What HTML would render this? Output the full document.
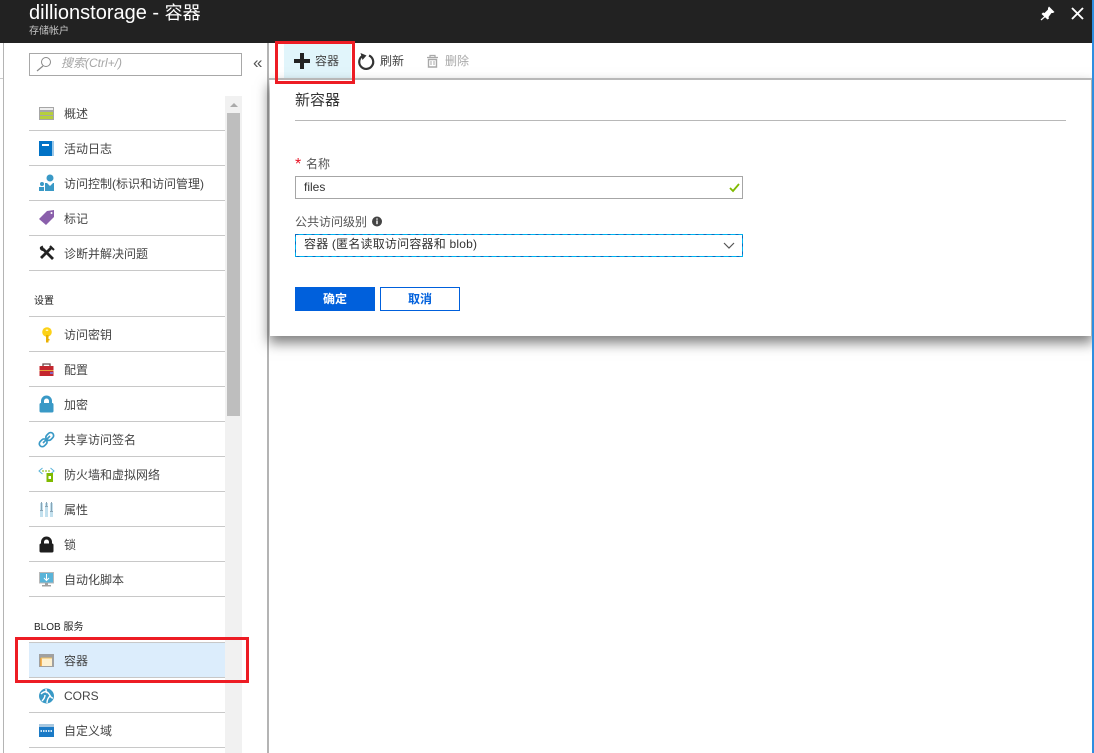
<!DOCTYPE html>
<html lang="zh-CN">
<head>
<meta charset="utf-8">
<style>
html,body{margin:0;padding:0;width:1094px;height:753px;overflow:hidden;background:#fff;}
body{position:relative;font-family:"Liberation Sans","Noto Sans CJK SC",sans-serif;font-size:12px;color:#444;}
div,span{position:absolute;white-space:nowrap;box-sizing:border-box;}
.t span{position:static;}
.t{line-height:16px;height:16px;}
.sep{left:29px;width:196px;height:1px;background:#c8c8c8;}
.h{font-size:10px;color:#222;left:34px;}
.m{left:64px;}
svg{position:absolute;left:0;top:0;}
</style>
</head>
<body>
<!-- frame -->
<div style="left:0;top:78px;width:3px;height:1px;background:#ccc"></div>
<div style="left:3px;top:43px;width:1px;height:710px;background:#b4b4b4"></div>
<div style="left:267px;top:43px;width:2px;height:710px;background:#b4b4b4"></div>

<!-- header -->
<div style="left:0;top:0;width:1092px;height:43px;background:#222"></div>
<div class="t" style="left:29px;top:1px;height:24px;line-height:24px;font-size:20px;color:#fff;">dillionstorage - <span style="font-size:18px">容器</span></div>
<div class="t" style="left:29px;top:24px;font-size:10px;color:#c4c4c4;">存储帐户</div>

<!-- search -->
<div style="left:29px;top:53px;width:213px;height:23px;border:1px solid #a8a8a8"></div>
<div class="t" style="left:61px;top:55px;font-style:italic;color:#a6a6a6;">搜索(Ctrl+/)</div>
<div class="t" style="left:253px;top:55px;font-size:17px;color:#555;">«</div>

<!-- scrollbar -->
<div style="left:225px;top:96px;width:17px;height:657px;background:#f1f1f1"></div>
<div style="left:227px;top:113px;width:13px;height:303px;background:#bebebe"></div>

<!-- separators -->
<div class="sep" style="top:130px"></div>
<div class="sep" style="top:165px"></div>
<div class="sep" style="top:200px"></div>
<div class="sep" style="top:235px"></div>
<div class="sep" style="top:270px"></div>
<div class="sep" style="top:316px"></div>
<div class="sep" style="top:351px"></div>
<div class="sep" style="top:386px"></div>
<div class="sep" style="top:421px"></div>
<div class="sep" style="top:456px"></div>
<div class="sep" style="top:491px"></div>
<div class="sep" style="top:526px"></div>
<div class="sep" style="top:561px"></div>
<div class="sep" style="top:596px"></div>
<div class="sep" style="top:642px"></div>
<div style="left:29px;top:643px;width:196px;height:34px;background:#dcedfc"></div>
<div class="sep" style="top:677px"></div>
<div class="sep" style="top:712px"></div>
<div class="sep" style="top:747px"></div>

<!-- menu -->
<div class="t m" style="top:106px">概述</div>
<div class="t m" style="top:141px">活动日志</div>
<div class="t m" style="top:176px">访问控制(标识和访问管理)</div>
<div class="t m" style="top:211px">标记</div>
<div class="t m" style="top:246px">诊断并解决问题</div>
<div class="t h" style="top:294px">设置</div>
<div class="t m" style="top:327px">访问密钥</div>
<div class="t m" style="top:362px">配置</div>
<div class="t m" style="top:397px">加密</div>
<div class="t m" style="top:432px">共享访问签名</div>
<div class="t m" style="top:467px">防火墙和虚拟网络</div>
<div class="t m" style="top:502px">属性</div>
<div class="t m" style="top:537px">锁</div>
<div class="t m" style="top:572px">自动化脚本</div>
<div class="t h" style="top:620px">BLOB 服务</div>
<div class="t m" style="top:653px">容器</div>
<div class="t m" style="top:688px">CORS</div>
<div class="t m" style="top:723px">自定义域</div>

<!-- toolbar -->
<div style="left:284px;top:43px;width:67px;height:36px;background:#e1f5fb"></div>
<div class="t" style="left:315px;top:53px">容器</div>
<div class="t" style="left:380px;top:53px">刷新</div>
<div class="t" style="left:445px;top:53px;color:#a8a8a8">删除</div>

<!-- panel -->
<div style="left:270px;top:80px;width:822px;height:256px;background:#fff;border-right:1px solid #b4b4b4;box-shadow:0 6px 12px 1px rgba(0,0,0,.5)"></div>
<div style="left:269px;top:78px;width:823px;height:2px;background:#b8b8b8"></div>
<div style="left:1092px;top:0;width:2px;height:753px;background:#2e8ee0"></div>
<div class="t" style="left:295px;top:92px;font-size:15px;line-height:18px;height:18px;color:#333">新容器</div>
<div style="left:295px;top:120px;width:771px;height:1px;background:#b8b8b8"></div>
<div class="t" style="left:295px;top:157px;font-size:16px;color:#e81123;">*</div>
<div class="t" style="left:306px;top:156px;color:#555">名称</div>
<div style="left:295px;top:176px;width:448px;height:23px;border:1px solid #a6a6a6"></div>
<div class="t" style="left:304px;top:179px;color:#333">files</div>
<div class="t" style="left:295px;top:214px;color:#555">公共访问级别</div>
<div class="t" style="left:304px;top:236px;color:#333;letter-spacing:.2px">容器 (匿名读取访问容器和 blob)</div>
<div class="t" style="left:295px;top:287px;width:80px;height:24px;line-height:24px;background:#0060dc;color:#fff;text-align:center;font-weight:bold">确定</div>
<div class="t" style="left:380px;top:287px;width:80px;height:24px;line-height:22px;border:1px solid #0060dc;color:#0060dc;text-align:center;font-weight:bold">取消</div>

<!-- red boxes -->
<div style="left:275px;top:41px;width:80px;height:43px;border:3px solid #ed1c24"></div>
<div style="left:15px;top:637px;width:234px;height:46px;border:3px solid #ed1c24"></div>

<svg width="1094" height="753" viewBox="0 0 1094 753" fill="none">
<!-- select dashed border -->
<rect x="295.500" y="234.500" width="447" height="22" stroke="#00b4f0"/>
<rect x="295.500" y="234.500" width="447" height="22" stroke="#0a6cc0" stroke-dasharray="3 5"/>
<!-- header icons -->
<path d="M1049 6.500L1054.500 12 1053 13 1051.500 13 1048.500 17 1049 18.500 1047.500 19.500 1041.500 14 1043 12.500 1044.500 13 1048 9.500 1048 8z" fill="#fff"/>
<path d="M1045 16.500l-4 3.500" stroke="#fff" stroke-width="1.200"/>
<path d="M1072 8l11 11M1083 8l-11 11" stroke="#fff" stroke-width="1.900"/>
<!-- search -->
<circle cx="46" cy="62" r="4.500" stroke="#8a8a8a"/>
<path d="M43 66l-6 5" stroke="#8a8a8a" stroke-width="1.200"/>
<!-- scroll arrow -->
<path d="M230 107l4-4 4 4z" fill="#aaa"/>
<!-- overview -->
<rect x="39" y="107" width="15" height="13" fill="#a6a6a6"/>
<rect x="40" y="108" width="13" height="2" fill="#eee"/>
<rect x="40" y="112" width="13" height="3" fill="#b6cf3c"/>
<rect x="40" y="116" width="13" height="3" fill="#b6cf3c"/>
<!-- activity log -->
<rect x="39" y="141" width="14" height="15" fill="#0072c6"/>
<rect x="52" y="141" width="2" height="15" fill="#9cc8e8"/>
<rect x="42" y="144" width="7" height="2" fill="#fff"/>
<!-- iam -->
<circle cx="50" cy="178" r="3.500" fill="#3999c6"/>
<path d="M45 183h2l3 3 3-3h1v8h-9z" fill="#3999c6"/>
<circle cx="42" cy="184" r="2" fill="#3999c6"/>
<rect x="39" y="187" width="5" height="4" fill="#3999c6"/>
<!-- tag -->
<path d="M39 219l8-8 7-1 0 7-8 8z" fill="#8a5fab"/>
<circle cx="51.500" cy="213" r="1" fill="#fff"/>
<!-- tools -->
<path d="M43 249l10 10M52 247l-11 11" stroke="#222" stroke-width="2.800"/>
<path d="M40 247a3 3 0 005 3l-1-1-1.500-3.500z" fill="#222"/>
<path d="M50 246l4 4" stroke="#222" stroke-width="2"/>
<!-- key -->
<circle cx="47" cy="332" r="4.800" fill="#fcd116"/>
<rect x="46" y="335" width="2.500" height="7.500" fill="#eab000"/>
<rect x="48" y="339" width="1.500" height="1.500" fill="#eab000"/>
<rect x="45.800" y="329.500" width="2.400" height="1.500" fill="#fff6c0"/>
<!-- config -->
<path d="M43 367v-3h7v3" stroke="#6a4a4a" stroke-width="1.300"/>
<rect x="39.500" y="366" width="14" height="10" fill="#c4262e"/>
<rect x="39.500" y="370" width="14" height="1" fill="#e8a13a"/>
<rect x="50" y="372" width="3" height="2" fill="#8a6ac0"/>
<!-- encrypt -->
<path d="M42.500 404v-3a4 4 0 018 0v3" stroke="#3999c6" stroke-width="3"/>
<rect x="39.500" y="403" width="14" height="9.500" rx="1.500" fill="#3999c6"/>
<!-- link -->
<path d="M43 443l7-7" stroke="#3999c6" stroke-width="1.600"/>
<rect x="39" y="440" width="8.500" height="6" rx="3" transform="rotate(-45 43 443)" stroke="#3999c6" stroke-width="1.700"/>
<rect x="45.500" y="433.500" width="8.500" height="6" rx="3" transform="rotate(-45 49.700 436.500)" stroke="#3999c6" stroke-width="1.700"/>
<!-- firewall -->
<path d="M42.500 468l-3.500 3 3.500 3M50.500 468l3.500 3-3.500 3" stroke="#59b4d9" stroke-width="1"/>
<path d="M42 471h9" stroke="#7fba00" stroke-dasharray="2 1"/>
<rect x="46.500" y="473" width="6.500" height="9" fill="#7fba00"/>
<rect x="48.500" y="476" width="2.500" height="3" fill="#fff"/>
<!-- properties -->
<g fill="#c2e0ee"><rect x="40" y="503" width="3" height="14"/><rect x="45" y="503" width="3" height="14"/><rect x="50" y="503" width="3" height="14"/></g>
<g fill="#8aa4b4"><rect x="41" y="502" width="1" height="8"/><rect x="46" y="502" width="1" height="4"/><rect x="51" y="502" width="1" height="9"/><rect x="40" y="510" width="3" height="1"/><rect x="45" y="506" width="3" height="1"/><rect x="50" y="511" width="3" height="1"/></g>
<!-- lock -->
<path d="M42.500 545v-3a4 4 0 018 0v3" stroke="#1e1e1e" stroke-width="3"/>
<rect x="39.500" y="543.500" width="14" height="9" rx="1.500" fill="#1e1e1e"/>
<!-- automation -->
<rect x="39" y="572" width="15" height="11.500" fill="#b8b8b8"/>
<rect x="40" y="573" width="13" height="9.500" fill="#59b4d9"/>
<path d="M46.500 574v6M44 578l2.500 2.500 2.500-2.500" stroke="#fff"/>
<rect x="45" y="583" width="3" height="2" fill="#a0a0a0"/>
<rect x="42" y="585" width="9" height="1.500" fill="#a0a0a0"/>
<!-- containers -->
<rect x="39" y="654" width="15" height="13" fill="#a0a0a0"/>
<rect x="41" y="658" width="11" height="8" fill="#fdf0d0"/>
<path d="M41 658v8" stroke="#f0a030" stroke-width="1.500"/>
<path d="M41 658h11" stroke="#f0c060"/>
<!-- cors -->
<circle cx="46.500" cy="696" r="7.500" fill="#3999c6"/>
<path d="M41 694c3-3 6-3 8 0s2 4 4 4M42 701c2-2 3-4 3-6M47 703c0-3 1-5 3-7M46 689c0 2 0 3 1 4" stroke="#fff" stroke-width="1.400"/>
<!-- domain -->
<rect x="39" y="724" width="15" height="13" fill="#1a7ac6"/>
<rect x="39" y="724" width="15" height="3" fill="#a8c8e0"/>
<path d="M40.500 731h12" stroke="#cfe6f7" stroke-width="2" stroke-dasharray="1.500 1"/>
<!-- toolbar icons -->
<path d="M302 53v16M294 61h16" stroke="#222" stroke-width="4"/>
<path d="M369 55.500a7 7 0 11-6.500 .5" stroke="#333" stroke-width="2.200"/>
<path d="M360.500 53l6 2.500-4 4.500z" fill="#333"/>
<path d="M427 57.500h11M430 57v-1.500h5V57" stroke="#a8a8a8" stroke-width="1.200"/>
<path d="M428.500 59.500h8V67h-8z" stroke="#a8a8a8" stroke-width="1.400"/>
<path d="M431 61v4M434 61v4" stroke="#a8a8a8"/>
<!-- form icons -->
<path d="M730 188l3 3 6-7" stroke="#7fba00" stroke-width="1.800"/>
<path d="M724 243l5 5 5-5" stroke="#555" stroke-width="1.200"/>
<circle cx="377" cy="221.500" r="5" fill="#444"/>
<rect x="376.300" y="220.500" width="1.400" height="3.700" fill="#fff"/>
<rect x="376.300" y="218.400" width="1.400" height="1.300" fill="#fff"/>
</svg>
</body>
</html>
